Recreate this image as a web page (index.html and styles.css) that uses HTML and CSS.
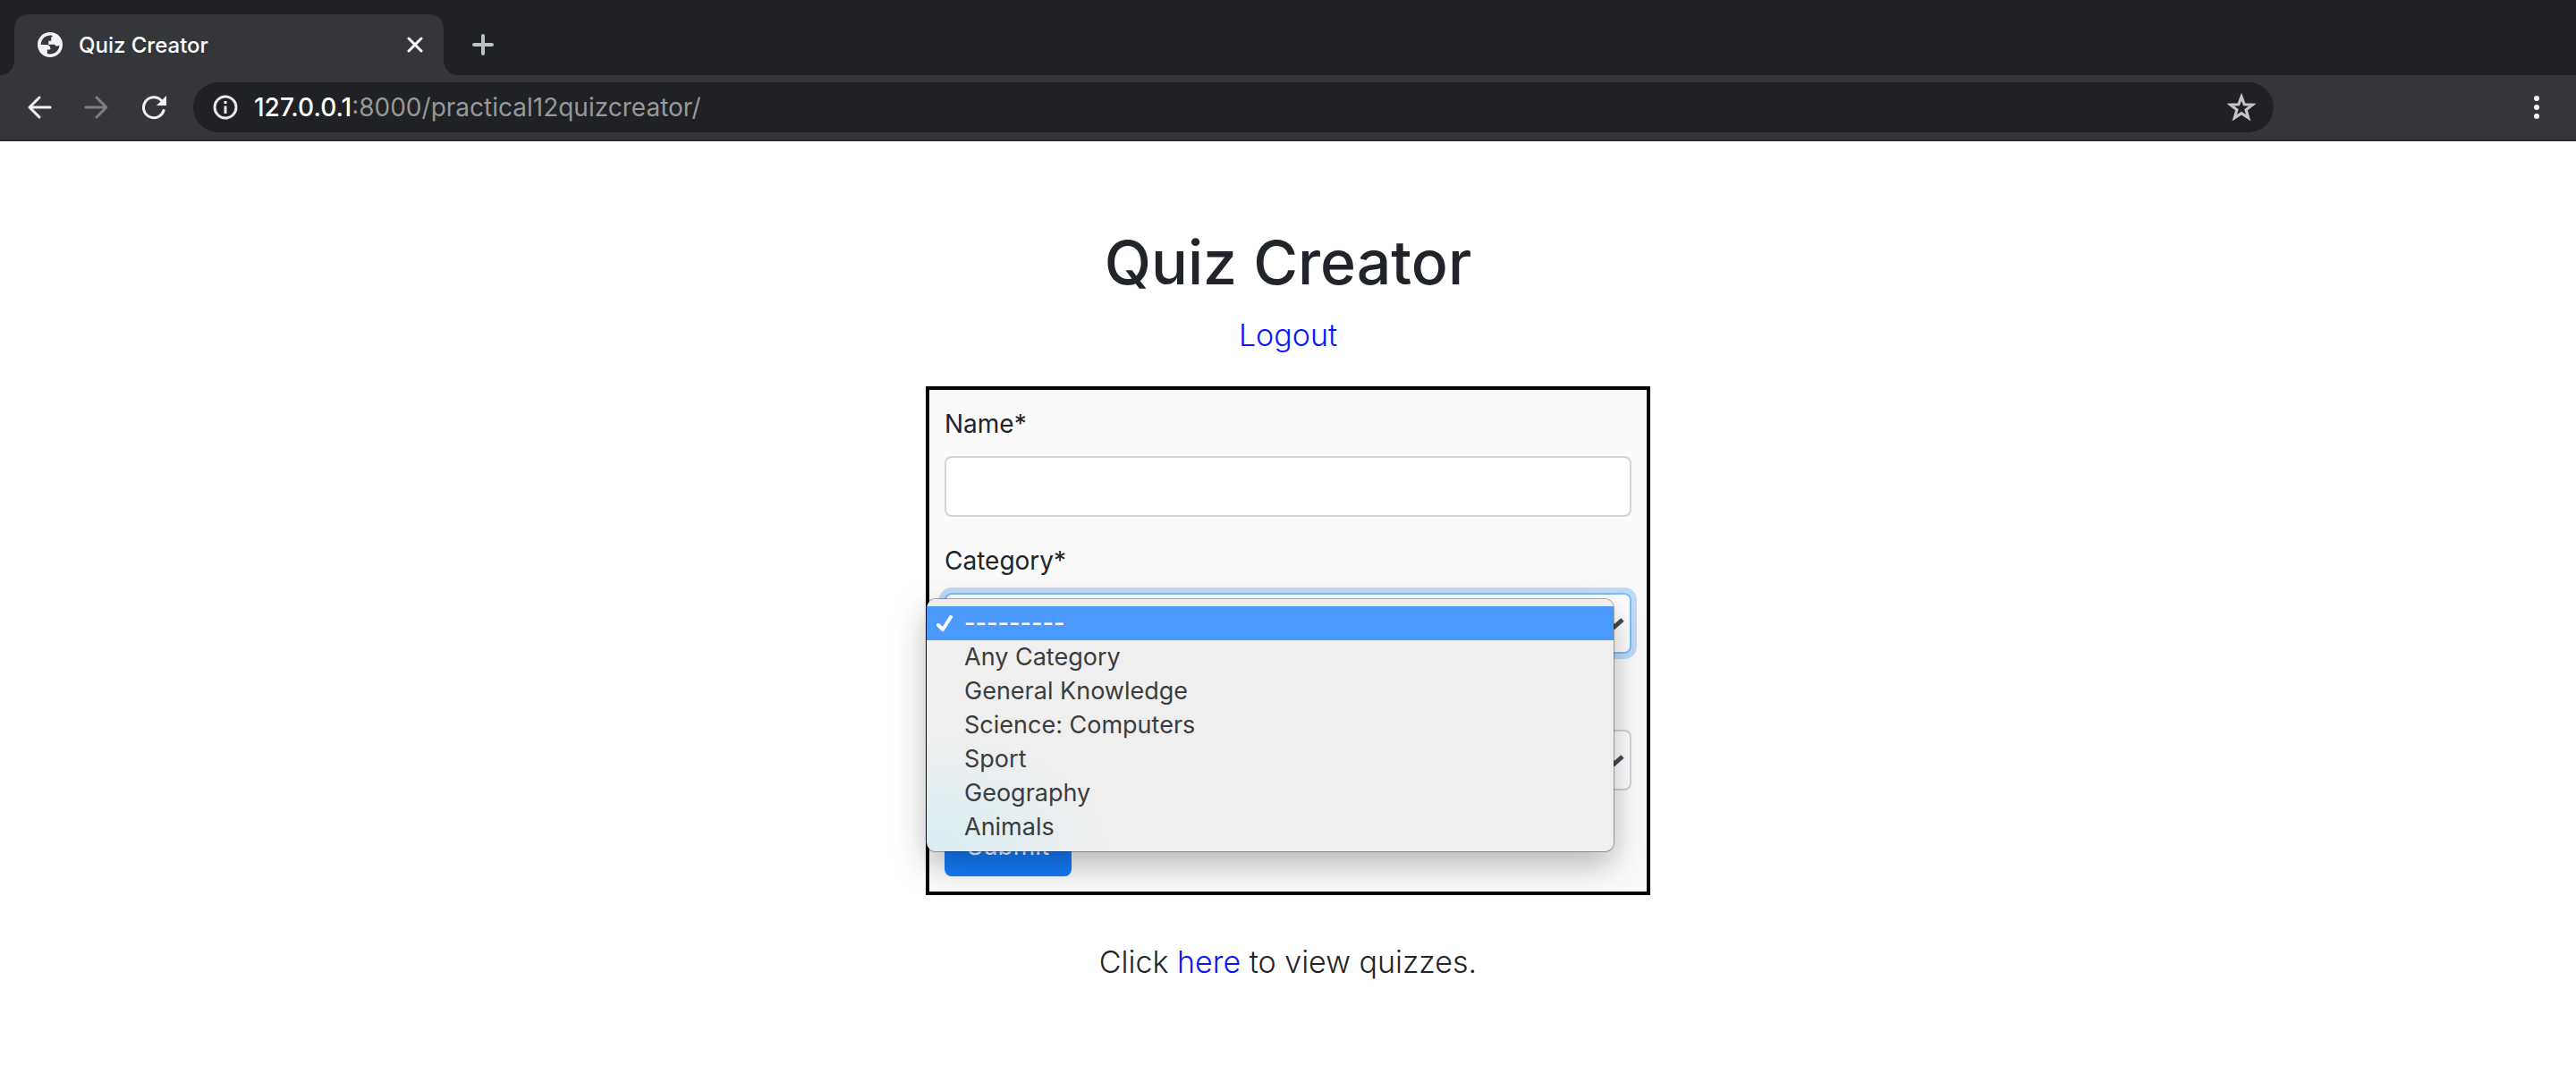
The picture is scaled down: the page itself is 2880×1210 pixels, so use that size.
FILE: index.html
```html
<!DOCTYPE html>
<html lang="en">
<head>
<meta charset="utf-8">
<title>Quiz Creator</title>
<link rel="stylesheet" href="styles.css">
</head>
<body>
<header class="browser">
  <div class="tabs">
    <div class="tab">
      <svg class="globe" viewBox="0 0 28 28" aria-hidden="true"><circle cx="14" cy="14" r="14" fill="#f1f3f4"/><path fill="#35363a" d="M15.500 3.500C9 3 4 7.500 3.600 14H10c2.800 0 4.300 1.800 4.300 4v1.600h-3.500v4.500C17.500 26 24 21.500 24.500 14.500c-1.500 1.700-4.500 1.500-5.500-.8h-6.800v-4h3V6.500c0-1 .8-1.600 2-2z"/></svg>
      <span class="tab-title">Quiz Creator</span>
      <button class="tab-close" aria-label="Close tab"><svg viewBox="0 0 18 18"><path d="M2 2l14 14M16 2L2 16" stroke="#fff" stroke-width="3" stroke-linecap="round"/></svg></button>
    </div>
    <button class="new-tab" aria-label="New tab"><svg viewBox="0 0 24 24"><path d="M12 2v20M2 12h20" stroke="#bdc1c6" stroke-width="4" stroke-linecap="round"/></svg></button>
  </div>
  <nav class="toolbar">
    <button class="tool" aria-label="Back"><svg viewBox="0 0 28 28"><path d="M26 14H3M14 3L3 14l11 11" fill="none" stroke="#f1f3f4" stroke-width="3" stroke-linecap="round" stroke-linejoin="round"/></svg></button>
    <button class="tool" aria-label="Forward"><svg viewBox="0 0 28 28"><path d="M2 14h23M14 3l11 11-11 11" fill="none" stroke="#7e7f82" stroke-width="3" stroke-linecap="round" stroke-linejoin="round"/></svg></button>
    <button class="tool" aria-label="Reload"><svg viewBox="0 0 28 28"><path d="M25 17.500A11.500 11.500 0 1 1 22.500 6.500" fill="none" stroke="#f1f3f4" stroke-width="3" stroke-linecap="round"/><path d="M28 1v11H17z" fill="#f1f3f4"/></svg></button>
    <div class="omnibox">
      <svg class="info" viewBox="0 0 28 28" aria-hidden="true"><circle cx="14" cy="14" r="12" fill="none" stroke="#e8eaed" stroke-width="3"/><path d="M14 12.500V21M14 7v3" stroke="#e8eaed" stroke-width="3"/></svg>
      <span class="url"><span class="host">127.0.0.1</span>:8000/practical12quizcreator/</span>
      <button class="star" aria-label="Bookmark this page"><svg viewBox="0 0 30 30"><path d="M15 4l3 8 8.500.4-6.700 5.200 2.400 8.400L15 21.200 7.800 26l2.400-8.400L3.500 12.400 12 12z" fill="none" stroke="#c4c5c7" stroke-width="3"/></svg></button>
    </div>
    <button class="menu-button" aria-label="Browser menu"><svg viewBox="0 0 28 28" fill="#f1f3f4"><circle cx="14" cy="4" r="3"/><circle cx="14" cy="14" r="3"/><circle cx="14" cy="24" r="3"/></svg></button>
  </nav>
</header>
<main class="page">
  <h1>Quiz Creator</h1>
  <p class="lead"><a href="#">Logout</a></p>
  <form class="quiz-form">
    <div class="group">
      <label for="name">Name*</label>
      <input class="control" type="text" id="name">
    </div>
    <div class="group">
      <label for="category">Category*</label>
      <div class="select-wrap">
        <select class="control focused" id="category"><option>---------</option></select>
        <svg class="chevron" viewBox="0 0 24 16" aria-hidden="true"><path d="M3 3l9 8 9-8" fill="none" stroke="#434a52" stroke-width="5"/></svg>
        <ul class="options" role="listbox" aria-label="Category">
          <li class="option selected" role="option" aria-selected="true"><svg class="check" viewBox="0 0 20 20" aria-hidden="true"><path d="M3 12l5 5 9-14" fill="none" stroke="#fff" stroke-width="4" stroke-linecap="round" stroke-linejoin="round"/></svg>---------</li>
          <li class="option" role="option">Any Category</li>
          <li class="option" role="option">General Knowledge</li>
          <li class="option" role="option">Science: Computers</li>
          <li class="option" role="option">Sport</li>
          <li class="option" role="option">Geography</li>
          <li class="option" role="option">Animals</li>
        </ul>
      </div>
    </div>
    <div class="group unlabelled">
      <div class="select-wrap">
        <select class="control" aria-label="Difficulty"></select>
        <svg class="chevron" viewBox="0 0 24 16" aria-hidden="true"><path d="M3 3l9 8 9-8" fill="none" stroke="#434a52" stroke-width="5"/></svg>
      </div>
    </div>
    <button class="submit" type="submit">Submit</button>
  </form>
  <p class="lead">Click <a href="#">here</a> to view quizzes.</p>
</main>
</body>
</html>
```
FILE: styles.css
```css
* { box-sizing: border-box; }
body {
  margin: 0;
  background: #fff;
  color: #212529;
  font-family: Inter, "Liberation Sans", sans-serif;
  font-size: 28px;
}
button { border: 0; padding: 0; background: none; font: inherit; }
svg { display: block; }

/* browser chrome */
.browser { background: #35363a; border-bottom: 2px solid #28292c; }
.tabs {
  display: flex;
  align-items: flex-end;
  height: 84px;
  padding-left: 16px;
  background: #202124;
}
.tab {
  position: relative;
  display: flex;
  align-items: center;
  width: 480px;
  height: 68px;
  padding: 0 23px 0 26px;
  border-radius: 16px 16px 0 0;
  background: #35363a;
  color: #fff;
}
.tab::before, .tab::after {
  content: "";
  position: absolute;
  bottom: 0;
  width: 16px;
  height: 16px;
}
.tab::before { left: -16px; background: radial-gradient(circle at 0 0, #202124 16px, #35363a 16px); }
.tab::after { right: -16px; background: radial-gradient(circle at 100% 0, #202124 16px, #35363a 16px); }
.globe { width: 28px; height: 28px; margin-right: 18px; }
.tab-title { flex: 1; font-size: 24px; font-weight: 500; }
.tab-close svg { width: 18px; height: 18px; }
.new-tab { height: 68px; margin-left: 32px; }
.new-tab svg { width: 24px; height: 24px; }
.toolbar { display: flex; align-items: center; height: 72px; padding: 0 30px; }
.tool { margin-right: 36px; }
.tool svg, .menu-button svg, .info { width: 28px; height: 28px; }
.omnibox {
  display: flex;
  flex: 1;
  align-items: center;
  height: 56px;
  margin: 0 280px 0 -6px;
  padding: 0 20px 0 22px;
  border-radius: 28px;
  background: #202124;
}
.url { flex: 1; margin-left: 18px; color: #96989a; }
.host { color: #fff; font-weight: 500; }
.star svg { width: 32px; height: 32px; }

/* page */
.page { padding: 92px 32px; text-align: center; }
h1 {
  margin: 0 0 12px;
  font-size: 68px;
  line-height: 86px;
  font-weight: 500;
}
.lead { margin: 0; font-size: 34px; line-height: 54px; font-weight: 300; }
.lead a { color: #0a14ff; text-decoration: none; }
.quiz-form {
  max-width: 810px;
  margin: 30px auto 48px;
  padding: 17px;
  border: 4px solid #000;
  background: #fafafa;
  text-align: left;
}
.group { margin-bottom: 28px; }
.group label { display: block; margin-bottom: 14px; line-height: 43px; }
.unlabelled { padding-top: 57px; }
.control {
  display: block;
  width: 100%;
  height: 68px;
  padding: 0 22px;
  border: 2px solid #ced4da;
  border-radius: 8px;
  background: #fff;
  color: #495057;
  font: inherit;
  appearance: none;
}
.focused { border-color: #80bdff; box-shadow: 0 0 0 6px #bfdbfa; }
.select-wrap { position: relative; }
.chevron { position: absolute; top: 27px; right: 7px; width: 24px; height: 16px; }
.options {
  position: absolute;
  z-index: 1;
  top: 7px;
  left: -20px;
  width: 100%;
  margin: 0;
  padding: 8px 0;
  border-radius: 10px;
  background: radial-gradient(ellipse 200px 130px at 0 100%, #d8edf3, #efefef);
  box-shadow: 0 0 0 1px #00000050, 0 14px 36px #00000048;
  color: #3c3c3c;
  font-size: 27px;
  list-style: none;
}
.option { position: relative; padding-left: 42px; line-height: 38px; }
.selected { background: #4b9afb; color: #fff; font-weight: 500; }
.check { position: absolute; top: 9px; left: 10px; width: 20px; height: 20px; }
.submit {
  display: block;
  height: 68px;
  padding: 0 25px;
  border-radius: 8px;
  background: #147bfa;
  color: #fff;
}
```
